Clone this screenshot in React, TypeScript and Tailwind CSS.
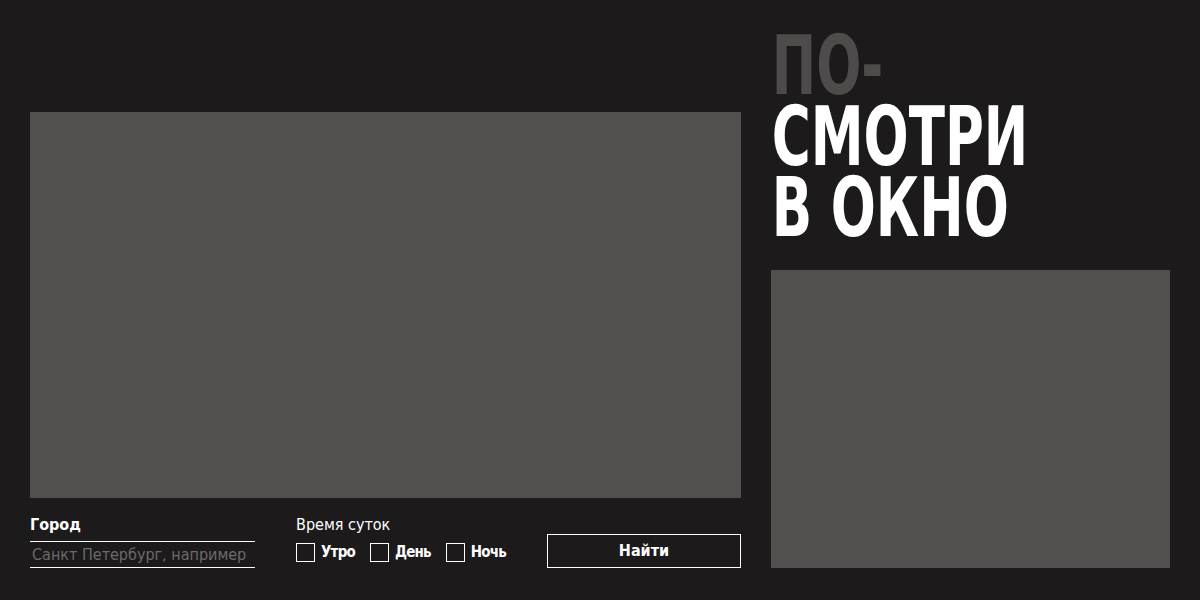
import { useState } from "react";

const condensed = { fontFamily: '"Liberation Sans Narrow", "DejaVu Sans Condensed", "Liberation Sans", sans-serif' };

export default function App() {
  const [times, setTimes] = useState<Record<string, boolean>>({});
  const options = ["Утро", "День", "Ночь"];

  return (
    <div className="w-[1200px] h-[600px] bg-[#1c1a1b] flex items-end gap-[30px] px-[30px] pb-[32px] overflow-hidden" style={condensed}>
      <div className="w-[711px] flex flex-col">
        <div className="h-[386px] bg-[#524f4f]" />
        <form className="flex items-end mt-[17px] text-white" onSubmit={(e) => e.preventDefault()}>
          <label className="w-[225px] flex flex-col">
            <span className="text-[16px] font-bold leading-[20px] mb-[6px]">Город</span>
            <input
              className="h-[27px] border-y border-white bg-transparent text-[16px] text-[#6c6a6a] placeholder:text-[#6c6a6a] px-[2px] outline-none"
              placeholder="Санкт Петербург, например"
            />
          </label>
          <div className="ml-[41px] flex flex-col">
            <span className="text-[16px] leading-[20px] mb-[6px]">Время суток</span>
            <div className="flex items-start gap-[15px] h-[27px]">
              {options.map((o) => (
                <label key={o} className="flex items-start gap-[6px] cursor-pointer">
                  <input
                    type="checkbox"
                    checked={!!times[o]}
                    onChange={() => setTimes((p) => ({ ...p, [o]: !p[o] }))}
                    className="appearance-none w-[19px] h-[19px] mt-[2px] border border-white bg-transparent checked:bg-white"
                  />
                  <span className="text-[15px] font-bold leading-[20px] tracking-[-0.8px] mt-[1px]">{o}</span>
                </label>
              ))}
            </div>
          </div>
          <button type="submit" className="ml-auto w-[194px] h-[34px] border border-white text-white text-[16px] font-bold">
            Найти
          </button>
        </form>
      </div>
      <div className="w-[399px] flex flex-col">
        <h1
          className="text-[82px] font-bold leading-[71px] text-white uppercase pl-[1px] origin-left scale-x-[0.72] whitespace-nowrap"
          style={{ fontFamily: '"DejaVu Sans Condensed", sans-serif' }}
        >
          <span className="text-[#4f4b4b]">По-</span>
          <br />
          смотри
          <br />в окно
        </h1>
        <div className="h-[298px] bg-[#524f4f] mt-[27px]" />
      </div>
    </div>
  );
}
